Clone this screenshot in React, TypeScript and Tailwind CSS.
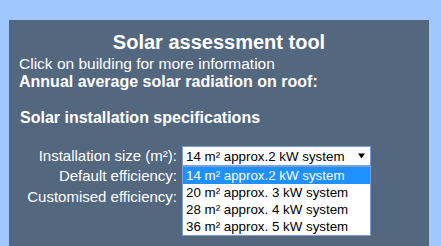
import React from "react";

const options = [
  "14 m² approx.2 kW system",
  "20 m² approx. 3 kW system",
  "28 m² approx. 4 kW system",
  "36 m² approx. 5 kW system",
];

function Caret() {
  return (
    <svg width="7" height="6" viewBox="0 0 7 6" className="block">
      <path d="M0 0.5 L7 0.5 L3.5 5.5 Z" fill="#000" />
    </svg>
  );
}

export default function App() {
  return (
    <div className="w-[441px] h-[246px] overflow-hidden bg-[#a0c8ff] pt-[20px] pl-[9px] font-['Liberation_Sans',Arial,sans-serif]">
      <div className="w-[420px] h-[226px] bg-[#53677f] pt-[11px] pl-[10px] text-white">
        {/* Header */}
        <div className="text-center text-[20px] font-bold leading-[23px] pr-[10px]">
          Solar assessment tool
        </div>
        <div className="mt-[1px] text-[15.5px] leading-[18px]">
          Click on building for more information
        </div>
        <div className="text-[16px] font-bold leading-[18px]">
          Annual average solar radiation on roof:
        </div>

        <div className="mt-[18px] text-[16px] font-bold leading-[18px] pl-[1px]">
          Solar installation specifications
        </div>

        {/* Specs */}
        <div className="mt-[19px] flex items-start">
          <div className="w-[158px] flex flex-col text-right text-[15px]">
            <div className="leading-[20px]">Installation size (m²):</div>
            <div className="leading-[20px]">Default efficiency:</div>
            <div className="leading-[21px]">Customised efficiency:</div>
          </div>

          <div className="relative ml-[5px]">
            <div className="w-[189px] h-[20px] bg-white border border-[#7c9fd9] flex items-center justify-between pl-[3px] pr-[5px] text-[13.33px] text-black">
              <span className="leading-[15px] whitespace-nowrap">{options[0]}</span>
              <Caret />
            </div>

            {/* open list */}
            <div className="absolute left-0 top-full w-[189px] bg-white border border-[#7c9fd9] text-[13.33px] text-black">
              {options.map((o, i) => (
                <div
                  key={o}
                  className={`h-[17px] leading-[17px] pl-[3px] whitespace-nowrap ${
                    i === 0 ? "bg-[#1e90ff] text-white" : ""
                  }`}
                >
                  {o}
                </div>
              ))}
            </div>
          </div>
        </div>
      </div>
    </div>
  );
}
